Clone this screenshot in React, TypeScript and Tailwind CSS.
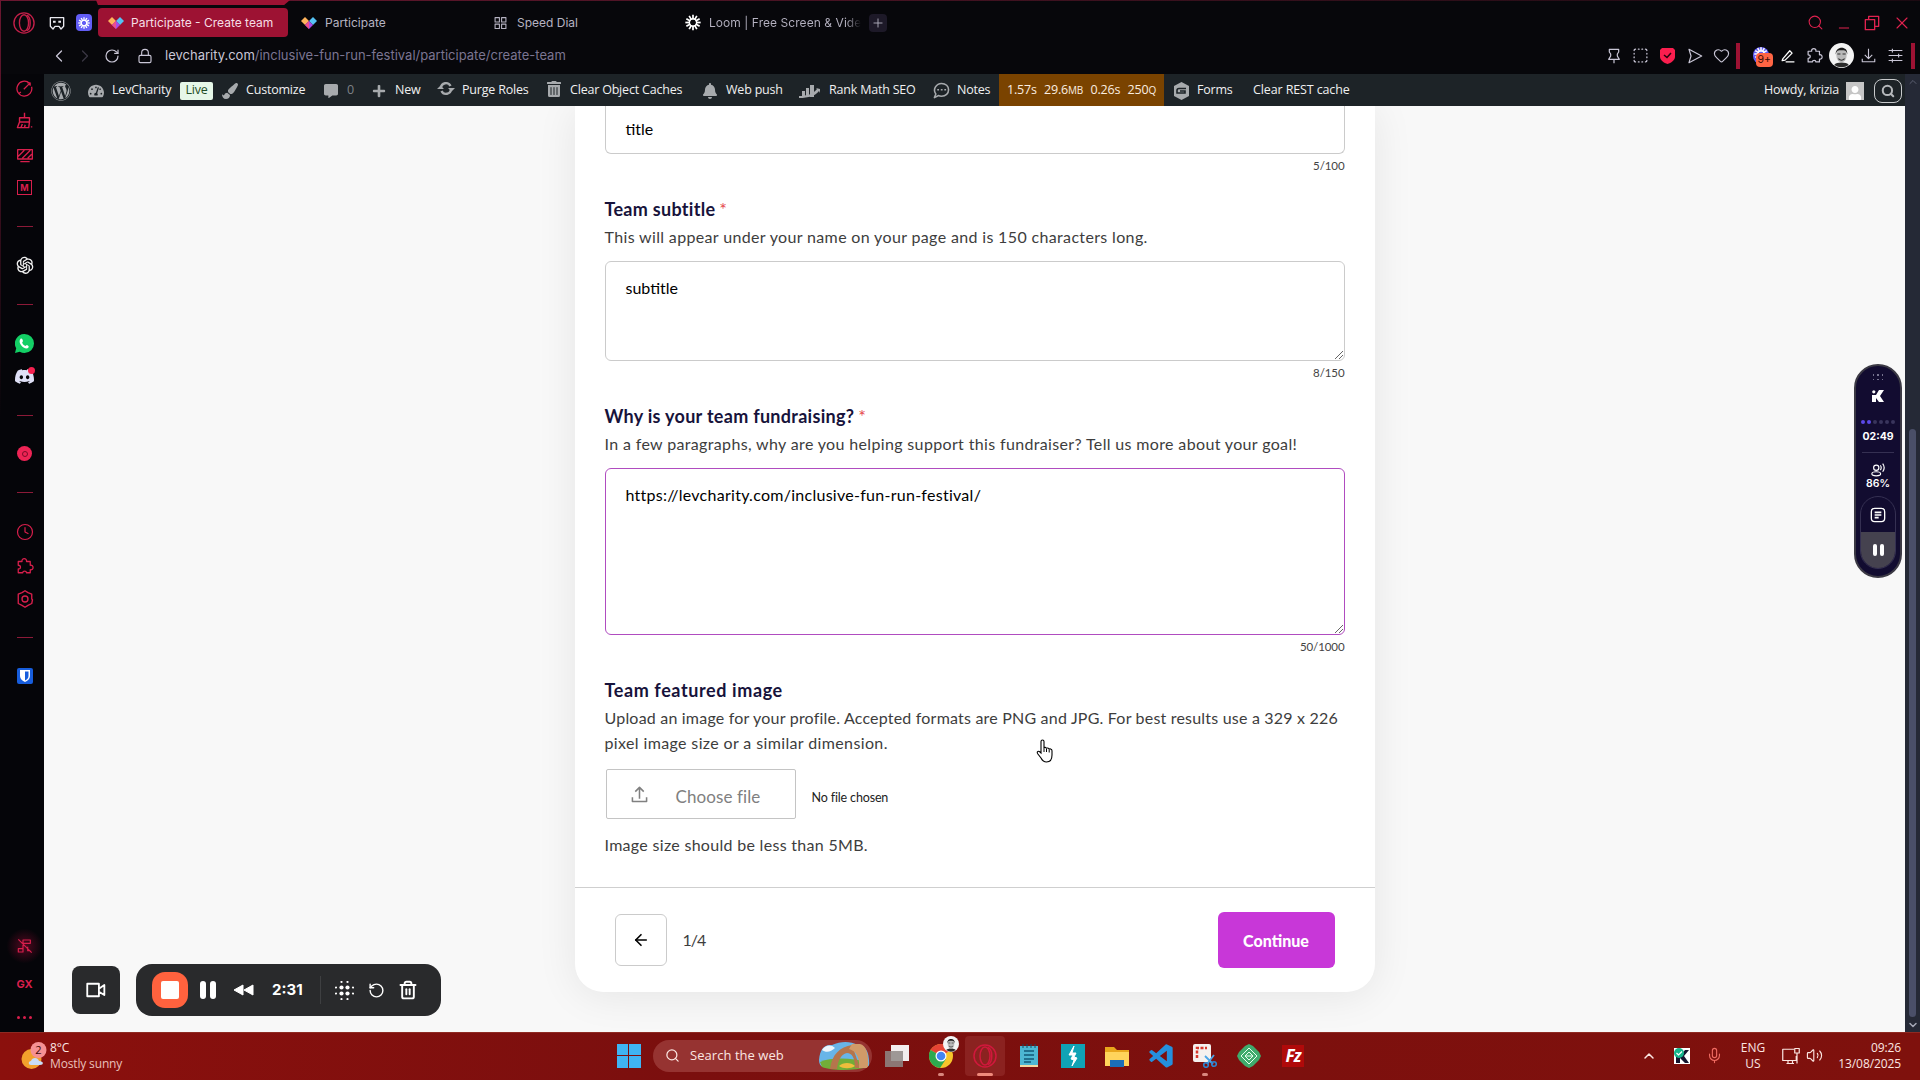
import React from 'react';
import {
  ArrowLeft, ChevronDown, ChevronLeft, ChevronRight, ChevronUp, Clock, Heart, Lock, Mic,
  Minus, Plus, RotateCcw, RotateCw, Search, SquareDashed, Trash2, Volume2, X,
} from 'lucide-react';
import { AiOutlineOpenAI } from 'react-icons/ai';
import { BiLogoVisualStudio } from 'react-icons/bi';
import { FaBell, FaCommentAlt, FaPaintBrush, FaPlus, FaTachometerAlt, FaTrashAlt, FaUser, FaWordpress } from 'react-icons/fa';
import { SiDiscord } from 'react-icons/si';

const ui = "font-['Inter','Liberation_Sans',sans-serif]";
const wpFont = "font-['Open_Sans','Noto_Sans',sans-serif]";
const formFont = "font-['Lato','Liberation_Sans',sans-serif]";

function Svg({ className, children, box = '0 0 24 24', width = 1.5 }: { className: string; children: React.ReactNode; box?: string; width?: number }) {
  return (
    <svg className={className} viewBox={box} fill="none" stroke="currentColor" strokeWidth={width} strokeLinejoin="round">
      {children}
    </svg>
  );
}

function LevLogo() {
  return (
    <svg className="h-[14px] w-4 shrink-0" viewBox="0 0 16 14">
      <path d="M0 5 4 1l4 4-4 4z" fill="#ffb35c" />
      <path d="M8 5l4-4 4 4-4 4z" fill="#55c3f5" />
      <path d="M4 9l4-4 4 4-4 4z" fill="#a94be6" />
      <path d="M4 9l4-4v8z" fill="#ee4f8b" />
    </svg>
  );
}

function Burst({ className }: { className: string }) {
  return (
    <Svg className={className} width={2.6}>
      {[0, 30, 60, 90, 120, 150, 180, 210, 240, 270, 300, 330].map((angle) => (
        <path key={angle} d="M12 0.500v7" transform={`rotate(${angle} 12 12)`} />
      ))}
      <circle cx="12" cy="12" r="5.500" strokeWidth="2.200" />
    </Svg>
  );
}

function OperaRing({ className }: { className: string }) {
  return (
    <Svg className={className}>
      <circle cx="12" cy="12" r="11" />
      <ellipse cx="12" cy="12" rx="5" ry="9" />
      <path d="M15 3.5c5 2 5 15 0 17" />
    </Svg>
  );
}

function Extension({ className }: { className: string }) {
  return (
    <Svg className={className} width={1.7}>
      <path d="M3 6h5c-1-5 7-5 6 0h5v5c5-1 5 7 0 6v4h-5c0-3-5-3-5 0H3v-5c4 0 4-5 0-5z" />
    </Svg>
  );
}

function Portrait({ className }: { className: string }) {
  return (
    <svg className={className} viewBox="0 0 24 24">
      <circle cx="12" cy="12" r="12" fill="#f4f4f4" />
      <path d="M5 21c2-3 12-3 14 0a12 12 0 0 1-14 0z" fill="#2b2b2b" />
      <ellipse cx="12" cy="11.5" rx="5" ry="7" fill="#b9b9b9" />
      <path d="M6.500 11c-1-8 12-9 11 0-1-4-2-4-5.500-4s-4.500 0-5.500 4z" fill="#1b1b1b" />
      <path d="M8 10.500h3M13 10.500h3M9 15c2 2 4 2 6 0" stroke="#333" strokeWidth="1" fill="none" />
    </svg>
  );
}

function TabBar() {
  return (
    <div className={`flex h-[37px] items-start pt-2 text-[12px] text-[#b6b3c2] ${ui}`}>
      <div className="flex h-[29px] w-full items-center">
        <OperaRing className="ml-[13px] h-[22px] w-[22px] text-[#c41f49]" />
        <Svg className="ml-3.5 h-[18px] w-4 text-[#e8e8ee]" width={2}>
          <path d="M2 4h20v13l-4 4-3-4H9l-3 4-4-4z" />
          <path d="M6 10h4M14 10h4" strokeWidth="3" />
        </Svg>
        <div className="ml-[11px] flex h-[17px] w-4 items-center justify-center rounded bg-[#625df5] text-white">
          <Burst className="h-3 w-3" />
        </div>
        <div className="ml-[6px] flex h-[29px] w-[190px] items-center rounded bg-[#9d1233] pl-2.5 text-[#f6dfe5]">
          <LevLogo />
          <span className="ml-[7px] whitespace-nowrap">Participate - Create team</span>
        </div>
        <div className="ml-0.5 flex w-[190px] items-center pl-[11px]">
          <LevLogo />
          <span className="ml-2">Participate</span>
        </div>
        <div className="ml-0.5 flex w-[190px] items-center pl-3">
          <Svg className="h-[14px] w-[13px]" width={2}>
            <path d="M2 2h8v8H2zM14 2h8v8h-8zM2 14h8v8H2zM14 14h8v8h-8z" />
          </Svg>
          <span className="ml-2.5">Speed Dial</span>
        </div>
        <div className="ml-0.5 flex w-[190px] items-center pl-[11px]">
          <Burst className="h-[17px] w-4 shrink-0 text-white" />
          <span className="ml-2 whitespace-nowrap bg-linear-to-r from-[#b6b3c2] from-90% to-transparent bg-clip-text tracking-[0.06px] text-transparent">
            Loom | Free Screen & Vide
          </span>
        </div>
        <div className="ml-[5px] flex h-[18px] w-[18px] items-center justify-center rounded bg-[#1d1928]">
          <Plus className="h-3.5 w-3.5" strokeWidth={1.5} />
        </div>
        <div className="ml-auto flex items-center text-[#e0224f]">
          <Search className="h-[17px] w-[17px]" strokeWidth={1.5} />
          <Minus className="ml-3 mt-2.5 h-4 w-4" strokeWidth={1.5} />
          <Svg className="ml-3 h-4 w-4" width={2}>
            <path d="M2 7h14v15H2z" />
            <path d="M7 7V2h15v15h-6" />
          </Svg>
          <X className="ml-[12px] mr-2 h-5 w-5" strokeWidth={1.3} />
        </div>
      </div>
    </div>
  );
}

function ToolCell({ children }: { children: React.ReactNode }) {
  return <div className="flex w-[27px] shrink-0 items-center justify-center">{children}</div>;
}

function AddressBar() {
  return (
    <div className={`flex h-[37px] items-center text-[13px] text-[#c9c6d6] ${ui}`}>
      <ChevronLeft className="ml-[49px] h-5 w-5" strokeWidth={1.5} />
      <ChevronRight className="ml-1.5 h-5 w-5 text-[#3a3744]" strokeWidth={1.5} />
      <RotateCw className="ml-[9px] h-4 w-4" strokeWidth={1.8} />
      <Lock className="ml-[17px] h-4 w-4" strokeWidth={1.7} />
      <span className="ml-3">
        levcharity.com<span className="text-[#7b7592]">/inclusive-fun-run-festival/participate/create-team</span>
      </span>
      <div className="ml-auto flex items-center">
        <ToolCell>
          <Svg className="h-4 w-4" width={1.8}>
            <path d="M5 2h14v4l-2 3v3l3 5H4l3-5V9L5 6zM12 17v6" />
          </Svg>
        </ToolCell>
        <ToolCell><SquareDashed className="h-[17px] w-[17px]" strokeWidth={1.8} /></ToolCell>
        <ToolCell>
          <svg className="h-[17px] w-[15px]" viewBox="0 0 15 17">
            <path d="M2 1h11l2 2v7c0 3-4 6-7.500 7C4 16 0 13 0 10V3z" fill="#fa1e4e" />
            <path d="m4 8 3 2.500L11 6" fill="none" stroke="#25030d" strokeWidth="1.500" />
          </svg>
        </ToolCell>
        <ToolCell>
          <Svg className="h-4 w-4" width={1.8}><path d="M3 2l19 10L3 22l3-10z" /></Svg>
        </ToolCell>
        <ToolCell><Heart className="h-[17px] w-[17px]" strokeWidth={1.6} /></ToolCell>
        <div className="ml-px h-[26px] w-1 bg-[#9d1233]" />
        <div className="ml-[7px]" />
        <ToolCell>
          <div className="relative flex h-[17px] w-4 items-start justify-center rounded-full bg-[#625df5] text-white">
            <Burst className="h-3.5 w-3.5" />
            <span className="absolute left-[3px] top-[6px] rounded bg-[#ff6544] px-[2px] text-[10.5px] leading-[14px] text-[#3b0d06]">9+</span>
          </div>
        </ToolCell>
        <ToolCell>
          <Svg className="h-3.5 w-3.5 text-white" width={2.2}><path d="M3 17 15 3l4 4L7 19l-5 1zM8 22h15" /></Svg>
        </ToolCell>
        <ToolCell><Extension className="h-[17px] w-[17px]" /></ToolCell>
        <ToolCell><Portrait className="h-[25px] w-[25px]" /></ToolCell>
        <ToolCell>
          <Svg className="h-[15px] w-[15px]" width={1.8}><path d="M12 1v15M6 11l6 6 6-6M2 17v5h20v-5" /></Svg>
        </ToolCell>
        <ToolCell>
          <Svg className="h-[15px] w-[15px]" width={1.8}><path d="M1 4h22M1 12h22M1 20h22M7 1v6M17 9v6M7 17v6" /></Svg>
        </ToolCell>
        <div className="ml-0.5 mr-[5px] h-[26px] w-1 bg-[#9d1233]" />
      </div>
    </div>
  );
}

function SideCell({ className = 'h-[33px]', children }: { className?: string; children: React.ReactNode }) {
  return <div className={`flex w-full shrink-0 items-center justify-center ${className}`}>{children}</div>;
}

function SideLine() {
  return (
    <SideCell className="h-11">
      <div className="h-px w-4 bg-[#8c1a38]" />
    </SideCell>
  );
}

function SideBar() {
  return (
    <div className="flex h-[958px] w-11 shrink-0 flex-col bg-[#050509] pl-[5px] text-[#d81f4c]">
      <SideCell className="h-[29px]">
        <Svg className="h-[17px] w-[17px]" width={1.8}><path d="M19 4.500a10.500 10.500 0 1 0 3 5M11 13l9-9v4M16 4h4M4 19l3-2" /></Svg>
      </SideCell>
      <SideCell className="h-[35px]">
        <Svg className="h-[17px] w-[17px]" width={2}><path d="M12 1v7M5 8h14v6H5zM5 14 2 22h16l1-8M7 22l2-5M12 22l1-4M21 21h2" /></Svg>
      </SideCell>
      <SideCell>
        <Svg className="h-4 w-4" width={2}><path d="M1 4h22v14H1zM2 14l9-9M8 17 20 5M16 17l6-6M5 22h14" /></Svg>
      </SideCell>
      <SideCell>
        <div className={`flex h-[15px] w-[15px] items-center justify-center border border-current text-[9px] font-bold ${ui}`}>M</div>
      </SideCell>
      <SideLine />
      <SideCell className="h-[34px] text-[#f1f1f1]"><AiOutlineOpenAI className="h-[22px] w-[22px]" /></SideCell>
      <SideLine />
      <SideCell className="h-[34px]">
        <svg className="h-[19px] w-[19px]" viewBox="0 0 24 24">
          <path d="M12 0a12 12 0 0 1 0 24c-2 0-4-.5-6-1.500L0 24l1.500-6A12 12 0 0 1 12 0z" fill="#13cf65" />
          <path d="M7 6c2-1 3 2 3 3l-1 2c1 2 2 3 4 4l2-1c2 1 3 2 2 3-3 5-15-5-10-11z" fill="#fff" />
        </svg>
      </SideCell>
      <SideCell>
        <div className="relative text-[#dfe0f6]">
          <SiDiscord className="h-[19px] w-[19px]" />
          <span className="absolute -right-px top-0 h-[7px] w-[7px] rounded-full bg-[#f5214f]" />
        </div>
      </SideCell>
      <SideLine />
      <SideCell>
        <div className="flex h-[15px] w-[15px] items-center justify-center rounded-full bg-[#ee2455]">
          <div className="h-1.5 w-1.5 rounded-full border border-[#7c0c28]" />
        </div>
      </SideCell>
      <SideLine />
      <SideCell className="h-[35px]"><Clock className="h-[18px] w-[18px]" strokeWidth={1.6} /></SideCell>
      <SideCell><Extension className="h-[18px] w-[18px]" /></SideCell>
      <SideCell>
        <Svg className="h-[18px] w-[18px]" width={1.8}>
          <path d="M12 1l4 2.500 5 2v6.500l1 1-1 5-5 2.500-4 2.500-4-2.500-5-2.500V5.500l5-2z" />
          <circle cx="12" cy="12" r="4" />
        </Svg>
      </SideCell>
      <SideLine />
      <SideCell className="h-[34px]">
        <svg className="h-4 w-4" viewBox="0 0 16 16">
          <rect width="16" height="16" rx="2" fill="#175ddc" />
          <path d="M3 2h10v6c0 3-2.500 5-5 6-2.500-1-5-3-5-6z" fill="#fff" />
          <path d="M8 3.500h3.500V8c0 2-1.500 3.500-3.500 4.500z" fill="#175ddc" />
        </svg>
      </SideCell>
      <div className="mt-auto flex h-[38px] w-full items-center justify-center bg-radial from-[#50081f] to-transparent to-65%">
        <Svg className="h-4 w-4" width={1.8}><path d="M9 20V3h11v5H9M2 16h7v5H2zM2 2l20 20M16 13v6h4" /></Svg>
      </div>
      <SideCell className={`h-[38px] text-[11px] font-bold ${ui}`}>GX</SideCell>
      <SideCell className="h-[29px]">
        <div className="flex gap-[3px]">
          <span className="h-[3px] w-[3px] rounded-full bg-current" />
          <span className="h-[3px] w-[3px] rounded-full bg-current" />
          <span className="h-[3px] w-[3px] rounded-full bg-current" />
        </div>
      </SideCell>
    </div>
  );
}

function WpItem({ className, icon, children }: { className: string; icon: React.ReactNode; children: React.ReactNode }) {
  return (
    <div className={`flex shrink-0 items-center whitespace-nowrap ${className}`}>
      <span className="mr-1 flex w-6 justify-center text-[#a7aaad]">{icon}</span>
      {children}
    </div>
  );
}

function WpBar() {
  return (
    <div className={`flex h-8 items-center bg-[#1d2327] pt-px text-[12.5px] tracking-[-0.2px] text-[#f0f0f1] ${wpFont}`}>
      <div className="mr-1.5 flex w-[34px] justify-center"><FaWordpress className="h-5 w-5 text-[#a7aaad]" /></div>
      <WpItem className="w-24" icon={<FaTachometerAlt className="h-4 w-4" />}>LevCharity</WpItem>
      <span className="mr-[5px] flex h-[18px] w-[33px] items-center justify-center rounded-xs bg-[#e6f7e8] text-[#1f4d25]">Live</span>
      <WpItem className="w-[101px]" icon={<FaPaintBrush className="h-4 w-4" />}>Customize</WpItem>
      <WpItem className="w-12" icon={<FaCommentAlt className="h-3.5 w-3.5" />}><span className="text-[#7d8186]">0</span></WpItem>
      <WpItem className="w-[67px]" icon={<FaPlus className="h-3.5 w-3.5" />}>New</WpItem>
      <WpItem
        className="w-[108px]"
        icon={
          <svg className="-mt-1 h-[15px] w-[18px]" viewBox="0 0 18 15" fill="none" stroke="currentColor" strokeWidth="2.400">
            <path d="M4 7a5 5 0 0 1 9.500-2M14 8a5 5 0 0 1-9.500 2" />
            <path d="M0 8h7L3.500 4.500zM11 7h7l-3.500 3.500z" fill="currentColor" stroke="none" />
          </svg>
        }
      >
        Purge Roles
      </WpItem>
      <WpItem className="w-[156px]" icon={<FaTrashAlt className="-mt-1 h-4 w-3.5" />}>Clear Object Caches</WpItem>
      <WpItem className="w-[103px]" icon={<FaBell className="h-4 w-3.5" />}>Web push</WpItem>
      <WpItem
        className="w-32"
        icon={
          <svg className="-ml-2 h-3.5 w-[21px]" viewBox="0 0 21 14" fill="currentColor">
            <path d="M3 7h3v6H3zM7 4h3v9H7zM11 1h4v12h-4z" />
            <path d="M0 12c8 0 14-2 18-7l-1-1 4 1v4l-1-2c-4 5-10 7-20 7z" />
          </svg>
        }
      >
        Rank Math SEO
      </WpItem>
      <WpItem
        className="w-[70px]"
        icon={
          <Svg className="h-[17px] w-[17px]" width={2.2}>
            <path d="M12 2c6 0 10 4 10 9s-4 9-10 9c-2 0-3 0-4-1l-6 3 2-5c-5-7 1-15 8-15z" />
            <path d="M6 11h2.500M11 11h2.500M16 11h2.500" />
          </Svg>
        }
      >
        Notes
      </WpItem>
      <div className="-mt-px flex h-8 w-[165px] shrink-0 items-center justify-between bg-[#7a4300] px-2 pt-px text-[#fbeee0]">
        <span>1.57s</span>
        <span>29.6<span className="text-[10px]">MB</span></span>
        <span>0.26s</span>
        <span>250<span className="text-[10px]">Q</span></span>
      </div>
      <WpItem
        className="ml-[5px] w-[84px]"
        icon={
          <svg className="h-[18px] w-[17px]" viewBox="0 0 17 18">
            <path d="M8.500 0 16 4v10l-7.500 4L1 14V4z" fill="#a7aaad" />
            <path d="M13 6.500H6a2 2 0 0 0-2 2V11h8V9H7" fill="none" stroke="#1d2327" strokeWidth="1.600" />
          </svg>
        }
      >
        Forms
      </WpItem>
      <span className="tracking-[-0.12px]">Clear REST cache</span>
      <span className="ml-auto">Howdy, krizia</span>
      <div className="ml-[7px] flex h-[18px] w-[18px] items-end justify-center bg-[#c6c6c6] text-white"><FaUser className="h-3.5 w-3.5" /></div>
      <div className="ml-2.5 mr-[3px] flex h-6 w-7 items-center justify-center rounded-lg border border-[#c8cacc] text-[#b5b8bb]">
        <Search className="h-3.5 w-3.5" strokeWidth={3.5} />
      </div>
    </div>
  );
}

function Counter({ children }: { children: React.ReactNode }) {
  return <div className="mt-1 text-right text-[11.5px] leading-4 tracking-[-0.1px] text-[#444]">{children}</div>;
}

function Label({ className = 'tracking-[0.29px]', children, required }: { className?: string; children: React.ReactNode; required?: boolean }) {
  return (
    <div className={`mt-[23px] text-[18px] font-bold leading-6 text-[#17133b] ${className}`}>
      {children}
      {required && <span className="ml-1 font-normal text-[#e5484d]">*</span>}
    </div>
  );
}

function Hint({ className = 'tracking-[0.35px]', children }: { className?: string; children: React.ReactNode }) {
  return <p className={`mt-[3px] whitespace-nowrap text-[16px] leading-[25px] text-[#3d3d3d] ${className}`}>{children}</p>;
}

function Area({ className, children }: { className: string; children: React.ReactNode }) {
  return (
    <div className={`relative mt-3 rounded-md border px-5 pt-[14px] text-[16px] leading-6 text-black ${className}`}>
      {children}
      <svg className="absolute bottom-px right-px h-2 w-2" viewBox="0 0 8 8" stroke="#555" strokeWidth="0.900">
        <path d="M0 8 8 0M4 8l4-4" />
      </svg>
    </div>
  );
}

function TeamForm() {
  return (
    <div className={`mx-auto h-[886px] w-[800px] rounded-b-[28px] bg-white shadow-[0_4px_40px_rgba(0,0,0,0.08)] ${formFont}`}>
      <div className="h-[782px] border-b border-[#cfcfcf] px-[30px]">
        <div className="h-12 rounded-b-md border border-t-0 border-[#cbcbcb] px-5 pt-[11px] text-[16px] leading-6 text-black">title</div>
        <Counter>5/100</Counter>

        <Label required>Team subtitle</Label>
        <Hint>This will appear under your name on your page and is 150 characters long.</Hint>
        <Area className="h-[100px] border-[#cbcbcb]">subtitle</Area>
        <Counter>8/150</Counter>

        <Label required>Why is your team fundraising?</Label>
        <Hint>In a few paragraphs, why are you helping support this fundraiser? Tell us more about your goal!</Hint>
        <Area className="h-[167px] border-[#b04cc0] tracking-[0.27px]">https://levcharity.com/inclusive-fun-run-festival/</Area>
        <Counter>50/1000</Counter>

        <Label className="tracking-[0.6px]">Team featured image</Label>
        <Hint className="tracking-[0.2px]">
          Upload an image for your profile. Accepted formats are PNG and JPG. For best results use a 329 x 226<br />
          <span className="tracking-[0.37px]">pixel image size or a similar dimension.</span>
        </Hint>
        <div className="mt-[14px] flex items-center">
          <div className="ml-px flex h-[50px] w-[190px] items-center rounded-xs border border-[#c4c4c4] text-[#808080]">
            <Svg className="ml-6 h-[17px] w-[17px]" width={2.2}><path d="M12 18V2M6 8l6-6 6 6M2 16v6h20v-6" /></Svg>
            <span className="ml-7 mt-[5px] text-[17px] tracking-[0.1px]">Choose file</span>
          </div>
          <span className="ml-4 mt-2 text-[12.5px] tracking-[-0.15px] text-[#222]">No file chosen</span>
        </div>
        <p className="mt-[13px] text-[16px] leading-[25px] tracking-[0.3px] text-[#3d3d3d]">Image size should be less than 5MB.</p>
      </div>
      <div className="flex h-[104px] items-center px-10">
        <div className="flex h-[52px] w-[52px] items-center justify-center rounded-md border border-[#cbcbcb] text-black">
          <ArrowLeft className="h-[18px] w-[18px]" strokeWidth={2.2} />
        </div>
        <span className="ml-4 text-[16px] tracking-[-1px] text-[#3d3d3d]">1/4</span>
        <div className="ml-auto flex h-14 w-[117px] items-center justify-center rounded-md bg-[#c837d8] pt-0.5 text-[16px] font-black text-white">Continue</div>
      </div>
    </div>
  );
}

function LoomBar() {
  return (
    <div className="absolute bottom-4 left-7 flex items-center gap-4 text-white">
      <div className="flex h-12 w-12 items-center justify-center rounded-lg bg-[#292a2c]">
        <Svg className="h-5 w-5" width={2.2}><path d="M1.500 4.500h14v15h-14zM15.500 10.500 22 6v12l-6.500-4" /></Svg>
      </div>
      <div className="flex h-[52px] w-[305px] items-center rounded-2xl bg-[#292a2c]">
        <div className="ml-4 flex h-9 w-9 items-center justify-center rounded-[13px] bg-[#ff623e]">
          <div className="h-[18px] w-[18px] rounded-xs bg-white" />
        </div>
        <div className="ml-3 flex gap-1">
          <div className="h-[18px] w-1.5 rounded-sm bg-white" />
          <div className="h-[18px] w-1.5 rounded-sm bg-white" />
        </div>
        <svg className="ml-[17px] h-3 w-[21px]" viewBox="0 0 21 12" fill="currentColor" stroke="currentColor" strokeLinejoin="round">
          <path d="M10 1v10L1 6zM20 1v10l-9-5z" />
        </svg>
        <span className={`ml-[18px] w-8 text-[15px] font-bold ${ui}`}>2:31</span>
        <div className="ml-4 h-7 w-px bg-[#3e3f41]" />
        <svg className="ml-3.5 h-[19px] w-[19px]" viewBox="0 0 19 19" fill="currentColor">
          {[1, 6.5, 12.5, 18].map((y, row) =>
            [1, 6.5, 12.5, 18].map((x, col) => {
              const inner = (row === 1 || row === 2 ? 1 : 0) + (col === 1 || col === 2 ? 1 : 0);
              return inner ? <circle key={`${row}-${col}`} cx={x} cy={y} r={inner === 2 ? 2.1 : 1.1} /> : null;
            }),
          )}
        </svg>
        <RotateCcw className="ml-3.5 h-[17px] w-[17px]" strokeWidth={2} />
        <Trash2 className="ml-[13px] h-5 w-5" strokeWidth={2.3} />
      </div>
    </div>
  );
}

function RecorderPill() {
  return (
    <div className={`absolute right-[3px] top-[290px] flex h-[214px] w-12 flex-col items-center rounded-full border-2 border-[#3b3944] bg-[#120c30] text-white ${ui}`}>
      <div className="mt-2 grid grid-cols-3 gap-[3px]">
        {[0, 1, 2, 3, 4, 5].map((n) => <span key={n} className="h-[1.5px] w-[1.5px] bg-[#777490]" />)}
      </div>
      <svg className="mt-[10px] h-3 w-3" viewBox="0 0 12 12" fill="currentColor">
        <path d="M0 5h4l3-5h5L8 6l4 6H7L4 8v4H0z" />
        <circle cx="1.800" cy="1.800" r="1.600" />
      </svg>
      <div className="mt-[18px] flex gap-0.5">
        <span className="h-1 w-1 rounded-full bg-[#5b49e8]" />
        <span className="h-1 w-1 rounded-full bg-[#5b49e8]" />
        {[0, 1, 2, 3].map((n) => <span key={n} className="h-1 w-1 rounded-full bg-[#39355c]" />)}
      </div>
      <div className="mt-[5px] text-[10.5px] font-bold leading-4">02:49</div>
      <div className="mt-[7px] h-px w-8 bg-[#353052]" />
      <Svg className="mt-2.5 h-3.5 w-3.5" width={2}>
        <circle cx="9" cy="8" r="4.500" />
        <ellipse cx="9" cy="18.500" rx="7.500" ry="3.500" />
        <path d="M16 4c2 2 2 6 0 8M20 1c3 4 3 10 0 14" />
      </Svg>
      <div className="-mt-px text-[10.5px] font-semibold leading-4">86%</div>
      <div className="mt-1 flex h-[73px] w-9 flex-col overflow-hidden rounded-full border border-[#353052]">
        <div className="flex h-[35px] items-center justify-center">
          <Svg className="h-4 w-4" width={2}>
            <rect x="2" y="2" width="20" height="20" rx="5" />
            <path d="M7 8h10M7 12h10M7 16h6" strokeWidth="2.500" />
          </Svg>
        </div>
        <div className="flex flex-1 items-center justify-center gap-[3px] bg-[#45424f]">
          <div className="h-3 w-1 rounded-xs bg-white" />
          <div className="h-3 w-1 rounded-xs bg-white" />
        </div>
      </div>
    </div>
  );
}

function HandCursor() {
  return (
    <svg className="absolute left-[992px] top-[665px] h-6 w-[18px]" viewBox="0 0 18 24">
      <path
        d="M5 14V2.500C5 .5 8 .5 8 2.500V9c0-1 2.500-1 2.500.8 0-1.300 2.700-1 2.700.9 0-1.300 2.800-1 2.800 1V16c0 4-2 7-5.500 7S6 21 5 19l-3.500-4.500C.5 12.500 2.500 11.500 4 13z"
        fill="white"
        stroke="black"
        strokeWidth="1.100"
      />
      <path d="M8 9v4M10.500 10v3M13.200 11v2.500" stroke="black" />
    </svg>
  );
}

function TaskIcon({ children, mark, active }: { children: React.ReactNode; mark?: boolean; active?: boolean }) {
  return (
    <div className={`relative flex h-10 w-10 shrink-0 items-center justify-center rounded ${active ? 'bg-[#8b2220]' : ''}`}>
      {children}
      {mark && <span className="absolute bottom-0 h-[3px] w-1.5 rounded-full bg-[#d9877e]" />}
      {active && <span className="absolute bottom-0 h-[3px] w-4 rounded-full bg-[#f08a7c]" />}
    </div>
  );
}

function TaskBar() {
  return (
    <div className={`flex h-12 items-center border-t border-[#8f2a22] bg-linear-to-r from-[#8b100d] via-[#7b0f0e] via-35% to-[#7f110d] pb-0.5 text-[12px] text-[#fbe6e2] ${wpFont}`}>
      <div className="flex w-[608px] items-center">
        <svg className="ml-[21px] h-7 w-[26px]" viewBox="0 0 26 28">
          <circle cx="10.500" cy="17" r="10" fill="#f3a02c" />
          <path d="M10 23c-3 0-3-4 0-4 1-4 7-4 8 0 5 0 5 4 1 4z" fill="#c9dcf5" />
          <circle cx="17.500" cy="8" r="8" fill="#f59193" />
          <text x="17.500" y="12" fontSize="11" textAnchor="middle" fill="#3d0907">2</text>
        </svg>
        <div className="ml-[3px] leading-4 tracking-[-0.15px]">
          <div>8°C</div>
          <div className="text-[#e9c0bb]">Mostly sunny</div>
        </div>
      </div>
      <TaskIcon>
        <div className="ml-px grid grid-cols-2 gap-px">
          {[0, 1, 2, 3].map((n) => <div key={n} className="h-[11.5px] w-[11.5px] bg-[#3fb4f3]" />)}
        </div>
      </TaskIcon>
      <div className="ml-[5px] mr-[5px] flex h-8 w-[219px] items-center overflow-hidden rounded-full bg-[#963331]">
        <Search className="ml-3 h-[15px] w-[15px]" strokeWidth={2} />
        <span className="ml-2.5 text-[13px] tracking-[0.05px]">Search the web</span>
        <svg className="ml-auto mr-0.5 h-7 w-[52px]" viewBox="0 0 52 28">
          <path d="M1 18C2 7 6 2 14 3c9-4 18-4 26 0 8 0 12 8 11 22H5c-3-1-4-4-4-7z" fill="#68b5e8" />
          <path d="M4 8c3-5 9-6 13-2-4 4-9 5-13 2z" fill="#eef5fa" />
          <path d="M2 20c12-5 32-4 48 0v5c-14 4-36 4-46 0z" fill="#72ad38" />
          <path d="M12 27C14 12 22 5 34 3l8 23h-5c0-10-3-15-8-15-5 1-9 6-10 16z" fill="#b5754c" />
          <path d="M34 2h8c6 1 9 10 8 24h-9C42 15 38 9 31 7z" fill="#d19a68" />
          <path d="M21 24c4-4 12-4 16 0-4 3-12 3-16 0z" fill="#efbd3c" />
        </svg>
      </div>
      <div className="flex gap-1">
        <TaskIcon>
          <svg className="h-6 w-6" viewBox="0 0 24 24">
            <path d="M6 1h18v16H6z" fill="#f2eeee" />
            <path d="M0 7h18v16H0z" fill="#8f8886" opacity="0.850" />
          </svg>
        </TaskIcon>
        <TaskIcon mark>
          <svg className="h-6 w-6" viewBox="0 0 24 24">
            <circle cx="12" cy="12" r="12" fill="#f7c52b" />
            <path d="M12 12 1.600 6A12 12 0 0 1 22.400 6z" fill="#e54335" />
            <path d="M12 12 1.600 6A12 12 0 0 0 11 24l6-9z" fill="#2da94f" />
            <circle cx="12" cy="12" r="5.500" fill="#fff" />
            <circle cx="12" cy="12" r="4.300" fill="#4285f4" />
          </svg>
          <Portrait className="absolute right-0.5 top-0 h-4 w-4" />
        </TaskIcon>
        <TaskIcon active><OperaRing className="h-6 w-6 text-[#d0183c]" /></TaskIcon>
        <TaskIcon>
          <svg className="h-6 w-5" viewBox="0 0 20 24">
            <path d="M1 2h18v20H1z" fill="#4db7d3" />
            <path d="M1 21h18v2H1z" fill="#f4d9a0" />
            <path d="M5 7h10M5 11h10M5 15h10M5 18h7" stroke="#125a78" strokeWidth="1.500" />
            <path d="M4 0v4M8 0v4M12 0v4M16 0v4" stroke="#164d63" />
          </svg>
        </TaskIcon>
        <TaskIcon>
          <svg className="h-6 w-6" viewBox="0 0 24 24">
            <path d="M0 0h24v24H0z" fill="#10a3b5" />
            <path d="m13 2-5 9h4l-2 4 3 1-2 6 5-8-3-1 2-4h-4z" fill="#fff" stroke="#fff" />
          </svg>
        </TaskIcon>
        <TaskIcon>
          <svg className="h-[22px] w-6" viewBox="0 0 24 22">
            <path d="M0 2h9l3 3h12v15H0z" fill="#e9a71c" />
            <path d="M0 7h24v14H0z" fill="#ffd45b" />
            <path d="M5 15h14v7H5z" fill="#1b6fb8" />
          </svg>
        </TaskIcon>
        <TaskIcon><BiLogoVisualStudio className="h-7 w-7 text-[#2590dd]" /></TaskIcon>
        <TaskIcon mark>
          <svg className="h-6 w-6" viewBox="0 0 24 24">
            <rect x="0" y="0" width="18" height="18" rx="2" fill="#f5f1ef" />
            <path d="M4 14V4h10" fill="none" stroke="#d6382c" strokeWidth="2.500" strokeDasharray="3 1.500" />
            <path d="m12 12 8 8M21 11l-7 9" stroke="#4aa5e8" strokeWidth="1.800" />
            <circle cx="13" cy="21" r="2.300" fill="none" stroke="#2d85d3" strokeWidth="1.600" />
            <circle cx="21" cy="20" r="2.300" fill="none" stroke="#2d85d3" strokeWidth="1.600" />
          </svg>
        </TaskIcon>
        <TaskIcon>
          <svg className="h-6 w-6" viewBox="0 0 24 24" fill="none" stroke="#e6fff0">
            <path d="m12 0 4 2 6 6 2 4-2 4-6 6-4 2-4-2-6-6-2-4 2-4 6-6z" fill="#3fab6c" stroke="none" />
            <path d="m12 4 8 8-8 8-8-8zM12 8l4 4-4 4-4-4zM9 12h6" />
          </svg>
        </TaskIcon>
        <TaskIcon>
          <div className="flex h-[22px] w-[22px] items-center justify-center bg-[#b00a0a] text-[17px] font-bold italic tracking-[-1px] text-white">Fz</div>
        </TaskIcon>
      </div>
      <div className="ml-auto flex items-center">
        <ChevronUp className="h-4 w-4" strokeWidth={2.2} />
        <svg className="ml-[17px] h-4 w-4" viewBox="0 0 16 16">
          <path d="M0 0h16v16H0z" fill="#fff" />
          <path d="M2 8h4l5-6h4l-5 6 5 7h-4l-5-5v5H2z" fill="#15152f" />
          <circle cx="5" cy="5" r="5" fill="#14b58b" />
          <path d="m2.500 5 2 2L8 3.500" fill="none" stroke="#fff" strokeWidth="1.200" />
        </svg>
        <Mic className="ml-4 h-[17px] w-[17px] text-[#ef6a61]" strokeWidth={1.6} />
        <div className="ml-[17px] w-[26px] text-center leading-4">ENG<br />US</div>
        <Svg className="ml-4 h-[18px] w-[18px]" width={1.6}>
          <path d="M16 3H1v15h18v-6M6 22h10M8 18v4M14 18v4M17 2h6v6h-6zM20 8v14" />
        </Svg>
        <Volume2 className="ml-[6px] h-[17px] w-[17px]" strokeWidth={1.6} />
        <div className="ml-4 mr-[19px] w-[62px] whitespace-nowrap text-right leading-4 tracking-[-0.1px]">
          09:26<br />
          <span className="-ml-2">13/08/2025</span>
        </div>
      </div>
    </div>
  );
}

export default function App() {
  return (
    <div className="relative flex h-[1080px] w-[1920px] flex-col overflow-hidden bg-[#07070b]">
      <div className="relative">
        <div className="absolute inset-x-0 top-0 h-px bg-linear-to-r from-[#6b1730] to-[#1c0a12]" />
        <div className="absolute left-24 top-0 h-[5px] w-[194px] bg-[#9d1233] [clip-path:polygon(0_0,100%_0,97%_100%,1%_100%)]" />
        <TabBar />
        <AddressBar />
      </div>
      <div className="flex h-[958px]">
        <SideBar />
        <div className="relative flex w-[1861px] flex-col overflow-hidden bg-[#f8f8f8]">
          <div className="relative z-10"><WpBar /></div>
          <TeamForm />
          <HandCursor />
          <LoomBar />
          <RecorderPill />
        </div>
        <div className="flex w-[15px] flex-col items-center bg-[#252936] text-[#a4a7b6]">
          <ChevronUp className="mt-0.5 h-3 w-3 text-[#5b5f70]" />
          <div className="mt-[341px] h-[588px] w-[7px] rounded-full bg-[#4a4f68]" />
          <ChevronDown className="mt-0.5 h-3 w-3" strokeWidth={3} />
        </div>
      </div>
      <TaskBar />
      {/* window edge glow */}
      <div className="absolute left-0 top-0 h-[420px] w-px bg-linear-to-b from-[#6b1730] to-transparent" />
    </div>
  );
}
